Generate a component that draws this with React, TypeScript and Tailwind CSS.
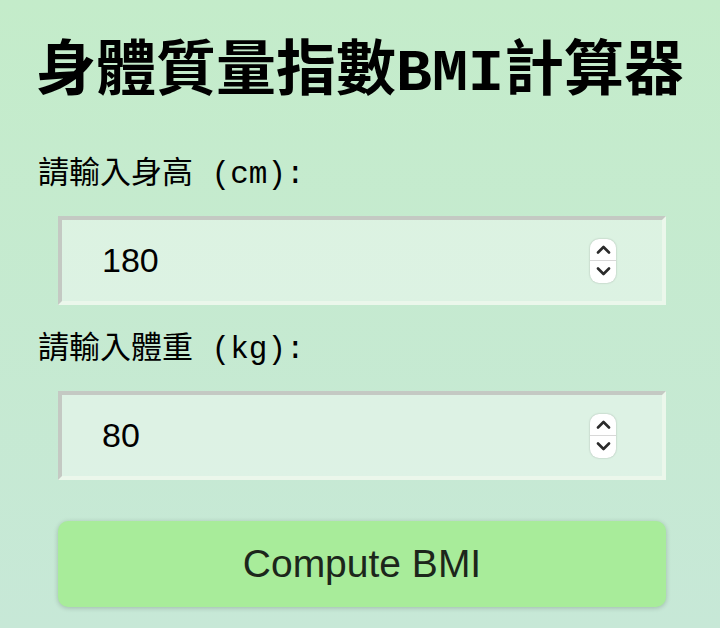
import { useState } from "react";

function Spinner() {
  return (
    <div className="pointer-events-none absolute right-[50px] top-1/2 flex h-[44px] w-[26px] -translate-y-1/2 flex-col overflow-hidden rounded-[9px] bg-white shadow-[0_0_2px_rgba(0,0,0,0.25)]">
      <div className="flex flex-1 items-center justify-center border-b border-[#d8d8d8]">
        <svg width="15" height="9" viewBox="0 0 15 9" fill="none">
          <path d="M2 7.5 7.5 2 13 7.5" stroke="#2b2b2b" strokeWidth="2.6" strokeLinecap="round" strokeLinejoin="round" />
        </svg>
      </div>
      <div className="flex flex-1 items-center justify-center">
        <svg width="15" height="9" viewBox="0 0 15 9" fill="none">
          <path d="M2 1.5 7.5 7 13 1.5" stroke="#2b2b2b" strokeWidth="2.6" strokeLinecap="round" strokeLinejoin="round" />
        </svg>
      </div>
    </div>
  );
}

function NumberField({ value, onChange }: { value: string; onChange: (v: string) => void }) {
  return (
    <div className="relative ml-[58px] w-[608px]">
      <input
        type="number"
        value={value}
        onChange={(e) => onChange(e.target.value)}
        className="block h-[89px] w-full border-4 border-t-[#c4c9c3] border-l-[#c4c9c3] border-r-[#ebf7eb] border-b-[#ebf7eb] bg-white/40 pl-[40px] font-['Liberation_Sans',Arial,sans-serif] text-[34px] text-black outline-none [appearance:textfield] [&::-webkit-inner-spin-button]:appearance-none [&::-webkit-outer-spin-button]:appearance-none"
      />
      <Spinner />
    </div>
  );
}

export default function App() {
  const [height, setHeight] = useState("180");
  const [weight, setWeight] = useState("80");

  return (
    <div className="min-h-[628px] w-full bg-gradient-to-b from-[#c4ecca] to-[#c7e8d7] font-['Liberation_Mono','Noto_Sans_CJK_TC',monospace] text-black">
      <h1 className="pt-[38px] text-center text-[60px] font-bold leading-[72px]">
        身體質量指數BMI計算器
      </h1>

      <label className="mt-[45px] block pl-[38px] text-[31px] leading-[40px]">
        請輸入身高 (cm):
      </label>
      <div className="mt-[21px]">
        <NumberField value={height} onChange={setHeight} />
      </div>

      <label className="mt-[25px] block pl-[38px] text-[31px] leading-[40px]">
        請輸入體重 (kg):
      </label>
      <div className="mt-[21px]">
        <NumberField value={weight} onChange={setWeight} />
      </div>

      <button className="ml-[58px] mt-[41px] flex h-[86px] w-[608px] items-center justify-center rounded-[10px] bg-[#a8ec9a] font-['Liberation_Sans',Arial,sans-serif] text-[39px] text-[#1c261b] shadow-[0_1px_5px_rgba(0,0,0,0.2)]">
        Compute BMI
      </button>
    </div>
  );
}
